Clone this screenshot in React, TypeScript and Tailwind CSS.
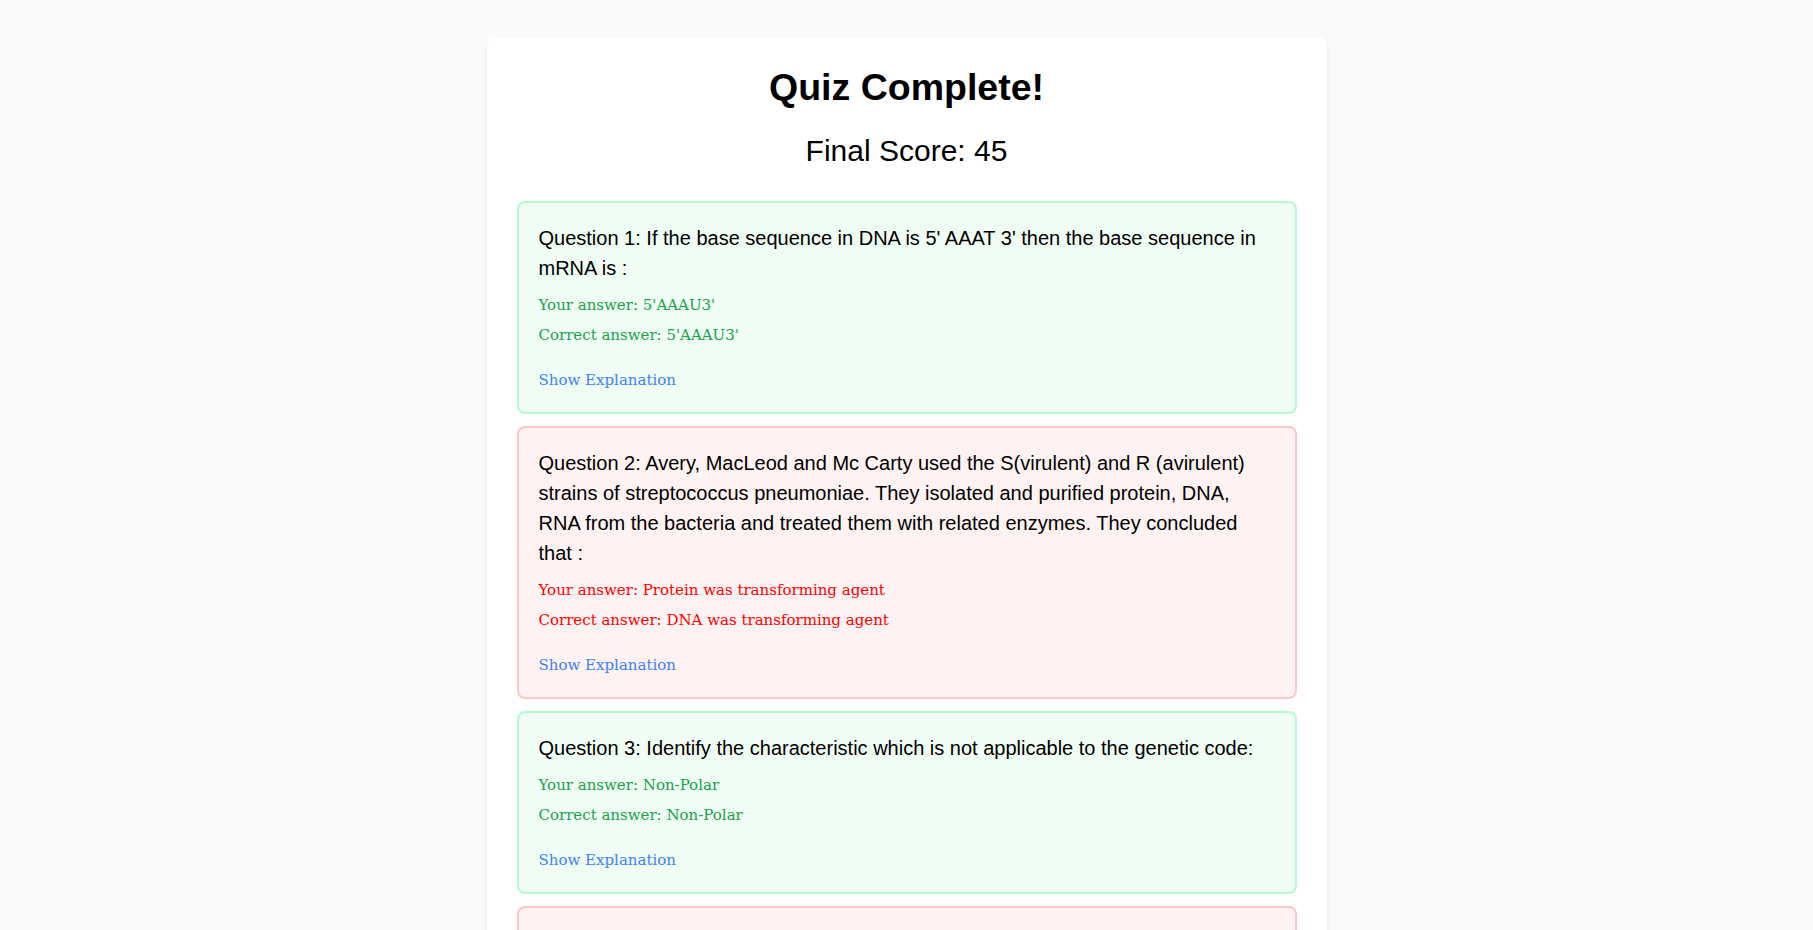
import React from "react";

type Result = {
    question: string;
    yourAnswer: string;
    correctAnswer: string;
};

const results: Result[] = [
    {
        question: "If the base sequence in DNA is 5' AAAT 3' then the base sequence in mRNA is :",
        yourAnswer: "5'AAAU3'",
        correctAnswer: "5'AAAU3'",
    },
    {
        question:
            "Avery, MacLeod and Mc Carty used the S(virulent) and R (avirulent) strains of streptococcus pneumoniae. They isolated and purified protein, DNA, RNA from the bacteria and treated them with related enzymes. They concluded that :",
        yourAnswer: "Protein was transforming agent",
        correctAnswer: "DNA was transforming agent",
    },
    {
        question: "Identify the characteristic which is not applicable to the genetic code:",
        yourAnswer: "Non-Polar",
        correctAnswer: "Non-Polar",
    },
    {
        question: "Which of the following is not a component of a nucleotide?",
        yourAnswer: "Phosphate",
        correctAnswer: "Amino acid",
    },
];

const ResultItem = ({ item, index }: { item: Result; index: number }) => {
    const correct = item.yourAnswer === item.correctAnswer;
    return (
        <div
            className={
                correct
                    ? "mb-3 rounded-lg border-2 border-green-200 bg-green-50 p-5"
                    : "mb-3 rounded-lg border-2 border-red-200 bg-red-50 p-5"
            }
        >
            <p className="font-['Liberation_Sans',Arial,sans-serif] text-xl leading-[30px] text-black">
                Question {index + 1}: {item.question}
            </p>
            <div className={correct ? "mt-[10px] text-[#16a34a]" : "mt-[10px] text-[#ff0000]"}>
                <p className="leading-6">Your answer: {item.yourAnswer}</p>
                <p className="mt-1.5 leading-6">Correct answer: {item.correctAnswer}</p>
            </div>
            <button className="mt-[21px] block leading-6 text-[#3b82f6] cursor-pointer">Show Explanation</button>
        </div>
    );
};

export default function App() {
    return (
        <div className="min-h-screen bg-gray-50 pt-[37px] font-['DejaVu_Serif',Georgia,serif] text-[15px]">
            <div className="mx-auto w-[840px] rounded-lg bg-white p-[30px] shadow-md">
                <h1 className="mb-[26px] text-center font-['Liberation_Sans',Arial,sans-serif] text-[37.5px] leading-10 font-bold text-black">
                    Quiz Complete!
                </h1>
                <p className="mb-8 text-center font-['Liberation_Sans',Arial,sans-serif] text-3xl text-black">
                    Final Score: 45
                </p>
                {results.map((r, i) => (
                    <ResultItem key={i} item={r} index={i} />
                ))}
            </div>
        </div>
    );
}
